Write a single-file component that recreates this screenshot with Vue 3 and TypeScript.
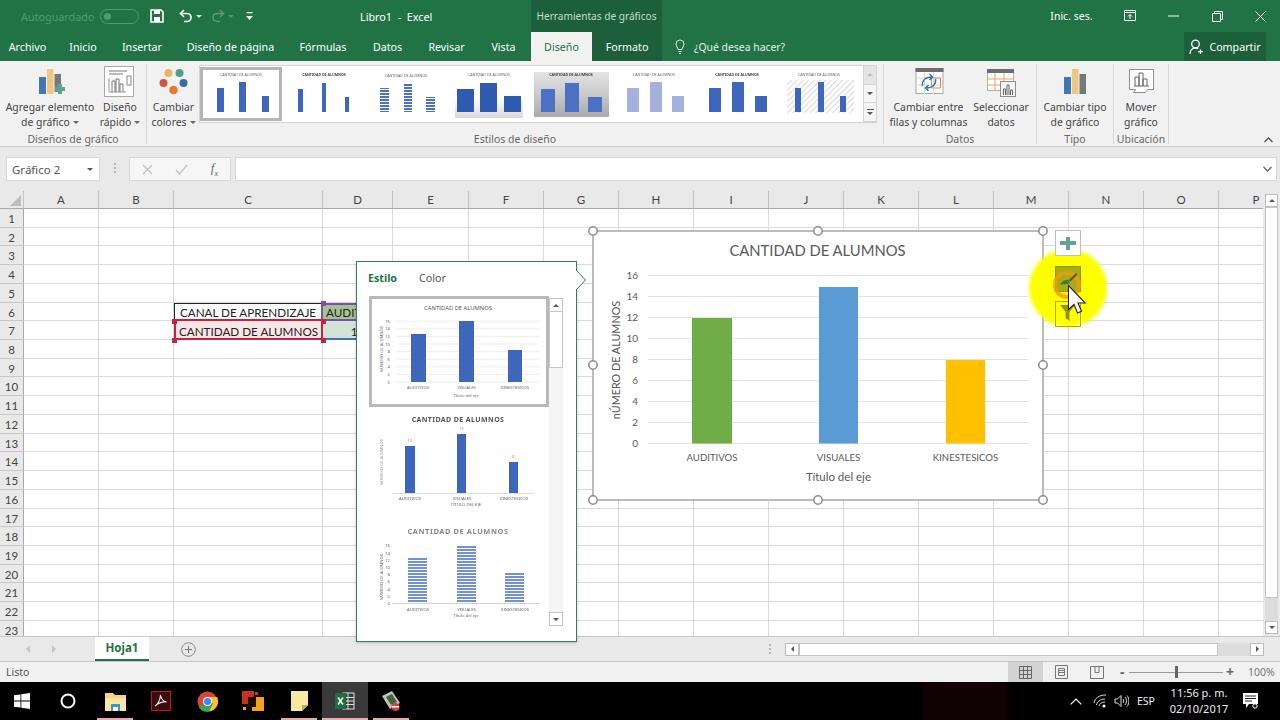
<script setup lang="ts">
const tabs = ['Archivo', 'Inicio', 'Insertar', 'Diseño de página', 'Fórmulas', 'Datos', 'Revisar', 'Vista', 'Diseño', 'Formato']

const columns = ['A', 'B', 'C', 'D', 'E', 'F', 'G', 'H', 'I', 'J', 'K', 'L', 'M', 'N', 'O', 'P']
const rows = Array.from({ length: 23 }, (_, i) => i + 1)

function cellClass(col: string, row: number) {
  const key = col + row
  if (key === 'C6') return 'c6'
  if (key === 'C7') return 'c7'
  if (key === 'D6') return 'd6'
  if (key === 'D7') return 'd7'
  return ''
}

function cellText(col: string, row: number) {
  const key = col + row
  if (key === 'C6') return 'CANAL DE APRENDIZAJE'
  if (key === 'C7') return 'CANTIDAD DE ALUMNOS'
  if (key === 'D6') return 'AUDITIVOS'
  if (key === 'D7') return '12'
  return ''
}

// bars of the big chart, screen coordinates
const ticks = [16, 14, 12, 10, 8, 6, 4, 2, 0]
const bars = [
  { x: 692, w: 40, top: 318, color: '#70ad47', label: 'AUDITIVOS', cx: 712 },
  { x: 819, w: 39, top: 287, color: '#5b9bd5', label: 'VISUALES', cx: 838.5 },
  { x: 946, w: 39, top: 360, color: '#ffc000', label: 'KINESTESICOS', cx: 965.5 },
]
const handles = [
  [593, 231], [818, 231], [1043, 231],
  [593, 365], [1043, 365],
  [593, 500], [818, 500], [1043, 500],
]

// ribbon gallery thumbs, screen coordinates as well
const gallery = [
  { title: 'CANTIDAD DE ALUMNOS', tx: 241, ty: 76, bold: false, fill: '#3f66bd', bars: [[217, 7, 88], [239, 7, 82], [262, 7, 96]] },
  { title: 'CANTIDAD DE ALUMNOS', tx: 324, ty: 76, bold: true, fill: '#3f66bd', bars: [[298, 5, 89], [322, 4, 83], [345, 4, 97]] },
  { title: 'CANTIDAD DE ALUMNOS', tx: 406, ty: 77, bold: false, fill: 'url(#stripeSmall)', bars: [[380, 9, 88], [404, 8, 83], [426, 9, 97]] },
  { title: 'CANTIDAD DE ALUMNOS', tx: 489, ty: 76, bold: false, fill: '#2f5cb0', bars: [[457, 17, 89], [480, 17, 83], [504, 17, 96]] },
  { title: 'CANTIDAD DE ALUMNOS', tx: 571, ty: 76, bold: true, fill: '#4a72c4', bars: [[541, 14, 89], [565, 14, 83], [588, 14, 97]] },
  { title: 'CANTIDAD DE ALUMNOS', tx: 654, ty: 76, bold: false, fill: '#a4b1de', bars: [[627, 12, 88], [650, 12, 82], [672, 12, 96]] },
  { title: 'CANTIDAD DE ALUMNOS', tx: 737, ty: 76, bold: true, fill: '#3f66bd', bars: [[709, 12, 88], [732, 12, 82], [755, 12, 96]] },
  { title: 'CANTIDAD DE ALUMNOS', tx: 819, ty: 76, bold: false, fill: '#3f66bd', bars: [[795, 6, 88], [818, 6, 82], [840, 6, 96]] },
]

// style pane thumbs
const paneTicks = [16, 14, 12, 10, 8, 6, 4, 2, 0]
const paneCats = ['AUDITIVOS', 'VISUALES', 'KINESTESICOS']
</script>

<template>
  <div class="app">
    <header class="titlebar">
      <div class="qat">
        <span class="autosave">Autoguardado</span>
        <span class="toggle"><i></i></span>
        <svg class="q-save" width="14" height="14" viewBox="0 0 14 14">
          <path d="M1 1h10l2 2v10H1z" fill="none" stroke="#fff" stroke-width="1.6" />
          <rect x="4" y="1" width="6" height="4" fill="#fff" />
          <rect x="4" y="8" width="6" height="5" fill="#fff" />
        </svg>
        <svg class="q-undo" width="14" height="14" viewBox="0 0 14 14">
          <path d="M5 1 1.500 4.500 5 8M2 4.500h6a4 4 0 0 1 0 8H5" fill="none" stroke="#fff" stroke-width="1.7" />
        </svg>
        <span class="caret white q-c1"></span>
        <svg class="q-redo" width="14" height="14" viewBox="0 0 14 14">
          <path d="M9 1l3.500 3.500L9 8M12 4.500H6a4 4 0 0 0 0 8h3" fill="none" stroke="#5c9c7a" stroke-width="1.5" />
        </svg>
        <span class="caret faint q-c2"></span>
        <svg class="q-more" width="7" height="9" viewBox="0 0 7 9">
          <rect x="0.500" y="0" width="6" height="1.300" fill="#fff" />
          <path d="M0 4h7L3.500 8z" fill="#fff" />
        </svg>
        <span class="doc-title">Libro1 &nbsp;-&nbsp; Excel</span>
      </div>
      <div class="tools-band">Herramientas de gráficos</div>
      <div class="win">
        <span class="signin">Inic. ses.</span>
        <span class="win-btn">
          <svg width="12" height="12" viewBox="0 0 12 12"><path d="M.5.5h11v10H.5zM.5 2.500h11M6 9V4.500M4 6.500l2-2 2 2" fill="none" stroke="#fff" /></svg>
        </span>
        <span class="win-btn"><svg width="11" height="2" viewBox="0 0 11 2"><path d="M0 1h11" stroke="#fff" /></svg></span>
        <span class="win-btn w3">
          <svg width="11" height="11" viewBox="0 0 11 11"><path d="M.5 2.500h8v8h-8zM2.500 2.500v-2h8v8h-2" fill="none" stroke="#fff" /></svg>
        </span>
        <span class="win-btn w4">
          <svg width="11" height="11" viewBox="0 0 11 11"><path d="M.5.500l10 10M10.500.500l-10 10" stroke="#fff" /></svg>
        </span>
      </div>
    </header>

    <nav class="tabbar">
      <span v-for="(t, i) in tabs" :key="i" class="tab" :class="{ active: i === 8, dark: i === 9 }">{{ t }}</span>
      <svg class="bulb" width="10" height="15" viewBox="0 0 10 15">
        <path d="M3 10.500C3 8.500 1 7.500 1 5a4 4 0 0 1 8 0c0 2.500-2 3.500-2 5.500zM3.500 12.500h3M4 14.500h2" fill="none" stroke="#e6f0ea" />
      </svg>
      <span class="tell">¿Qué desea hacer?</span>
      <span class="share">
        <svg width="15" height="16" viewBox="0 0 15 16">
          <circle cx="6.500" cy="5" r="3.800" fill="none" stroke="#fff" stroke-width="1.300" />
          <path d="M1 15c0-3.500 2.200-6 5.500-6 1 0 2 .2 2.700.7M11.500 10.500v4.500M9.200 12.700h4.600" fill="none" stroke="#fff" stroke-width="1.300" />
        </svg>
        Compartir
      </span>
    </nav>

    <section class="ribbon">
      <div class="group g1">
        <div class="group-body">
          <div class="rb w-add">
            <svg class="rb-icon" width="40" height="35" viewBox="30 64 40 35">
              <rect x="39" y="77" width="7" height="17" fill="#3f78b5" />
              <rect x="47" y="69" width="6.500" height="25" fill="#efc77c" />
              <rect x="54.500" y="74" width="6.500" height="18" fill="#77787b" />
              <path d="M58 87h-3v4h3v3h4v-3h3v-4h-3v-3h-4z" fill="#5fa394" />
            </svg>
            <span class="rb-text">Agregar elemento<br />de gráfico<span class="caret"></span></span>
          </div>
          <div class="rb w-quick">
            <svg class="rb-icon" width="40" height="35" viewBox="100 64 40 35">
              <rect x="104.500" y="66.500" width="29" height="30" fill="#fff" stroke="#a8a8a8" />
              <path d="M109 71h18M109 74h14" stroke="#777" stroke-width="1" />
              <path d="M109 78v14h17" fill="none" stroke="#999" />
              <path d="M112 92V81h3v11M116 92V79h3v13M120 92v-8h3v8" fill="none" stroke="#777" />
              <rect x="127" y="76" width="4" height="9" fill="none" stroke="#888" />
            </svg>
            <span class="rb-text">Diseño<br />rápido<span class="caret"></span></span>
          </div>
        </div>
        <div class="group-label">Diseños de gráfico</div>
      </div>

      <div class="group g2">
        <div class="group-body">
          <div class="rb w-colors">
            <svg class="rb-icon" width="40" height="35" viewBox="153.500 64 40 35">
              <circle cx="168" cy="73" r="4" fill="#e8b56b" />
              <circle cx="179" cy="73" r="4" fill="#4f9e8d" />
              <circle cx="163" cy="83" r="4" fill="#d9503f" />
              <circle cx="183" cy="83" r="4" fill="#3d66ad" />
              <circle cx="173" cy="90" r="4.300" fill="#e87a2e" />
            </svg>
            <span class="rb-text">Cambiar<br />colores<span class="caret"></span></span>
          </div>
          <div class="gallery">
            <svg class="gallery-svg" width="663" height="56" viewBox="200 66 663 56">
              <defs>
                <pattern id="stripeSmall" width="3" height="3" patternUnits="userSpaceOnUse">
                  <rect width="3" height="3" fill="#fff" />
                  <rect width="3" height="2" fill="#4a72c4" />
                </pattern>
                <pattern id="hatch" width="4" height="4" patternUnits="userSpaceOnUse" patternTransform="rotate(45)">
                  <rect width="4" height="4" fill="#fff" />
                  <rect width="1" height="4" fill="#d8d8d8" />
                </pattern>
                <linearGradient id="greyBg" x1="0" y1="0" x2="0" y2="1">
                  <stop offset="0" stop-color="#e4e4e4" />
                  <stop offset=".5" stop-color="#c9c9c9" />
                  <stop offset="1" stop-color="#a9a9a9" />
                </linearGradient>
                <linearGradient id="softBg" x1="0" y1="0" x2="0" y2="1">
                  <stop offset=".4" stop-color="#fff" />
                  <stop offset="1" stop-color="#d9d9d9" />
                </linearGradient>
              </defs>
              <rect x="200" y="66" width="663" height="56" fill="#fff" />
              <rect x="201.500" y="68.500" width="79" height="51" fill="#fff" stroke="#b5b5b5" stroke-width="3" />
              <rect x="455" y="84" width="68" height="34" fill="url(#softBg)" />
              <rect x="534" y="72" width="75" height="45" fill="url(#greyBg)" />
              <rect x="787" y="80" width="67" height="33" fill="url(#hatch)" />
              <g v-for="(g, i) in gallery" :key="i">
                <text :x="g.tx" :y="g.ty" class="g-title" :class="{ bold: g.bold }" text-anchor="middle">{{ g.title }}</text>
                <rect v-for="(b, j) in g.bars" :key="j" :x="b[0]" :y="b[2]" :width="b[1]" :height="112 - b[2]" :fill="g.fill" />
              </g>
            </svg>
            <div class="gallery-scroll">
              <span class="gs-btn disabled"><i class="tri up"></i></span>
              <span class="gs-btn"><i class="tri down"></i></span>
              <span class="gs-btn"><i class="more"></i><i class="tri down"></i></span>
            </div>
          </div>
        </div>
        <div class="group-label">Estilos de diseño</div>
      </div>

      <div class="group g3">
        <div class="group-body">
          <div class="rb w-switch">
            <svg class="rb-icon" width="40" height="35" viewBox="908.500 64 40 35">
              <rect x="915.500" y="68.500" width="27" height="25" fill="#fff" stroke="#a6a6a6" />
              <rect x="915" y="68" width="28" height="4" fill="#6d6d6d" />
              <path d="M915 78h28M915 85h28M924 72v22M933 72v22" stroke="#d8d8d8" />
              <path d="M931 78h9v10h-9z" fill="none" stroke="#ed8b4a" />
              <path d="M922 86c-1-5 3-9 9-9M929 74l3 3-3 3M935 79c1 5-3 9-9 9M928 85l-3 3 3 3" fill="none" stroke="#2f6fb1" stroke-width="1.400" />
            </svg>
            <span class="rb-text">Cambiar entre<br />filas y columnas</span>
          </div>
          <div class="rb w-select">
            <svg class="rb-icon" width="40" height="35" viewBox="981 64 40 35">
              <rect x="987.500" y="69.500" width="26" height="21" fill="#fff" stroke="#b0b0b0" />
              <rect x="987" y="69" width="27" height="4" fill="#6d6d6d" />
              <path d="M987 79h26M987 85h13M995 73v18M1004 73v8" stroke="#eda16b" />
              <rect x="1000.500" y="81.500" width="15" height="15" fill="#f4f4f4" stroke="#8c8c8c" />
              <path d="M1003.500 95v-6h2v6M1007 95v-10h2v10M1010.500 95v-5h2v5" fill="none" stroke="#666" />
            </svg>
            <span class="rb-text">Seleccionar<br />datos</span>
          </div>
        </div>
        <div class="group-label">Datos</div>
      </div>

      <div class="group g4">
        <div class="group-body">
          <div class="rb w-type">
            <svg class="rb-icon" width="40" height="35" viewBox="1055 64 40 35">
              <rect x="1064" y="77" width="7" height="17" fill="#3f78b5" />
              <rect x="1072" y="69" width="6.500" height="25" fill="#efc77c" />
              <rect x="1079.500" y="74" width="6.500" height="20" fill="#77787b" />
            </svg>
            <span class="rb-text">Cambiar tipo<br />de gráfico</span>
          </div>
        </div>
        <div class="group-label">Tipo</div>
      </div>

      <div class="group g5">
        <div class="group-body">
          <div class="rb w-move">
            <svg class="rb-icon" width="40" height="35" viewBox="1121 64 40 35">
              <path d="M1129.500 69.500h24v20h-6l-2 3h-12l2-3h-6z" fill="#fff" stroke="#8f8f8f" />
              <path d="M1135 86V77h4v9M1139 86V73h4v13M1143 86v-7h4v7M1134 86h15" fill="none" stroke="#666" />
            </svg>
            <span class="rb-text">Mover<br />gráfico</span>
          </div>
        </div>
        <div class="group-label">Ubicación</div>
      </div>

      <svg class="collapse" width="9" height="6" viewBox="0 0 9 6"><path d="M.5 5l4-4 4 4" fill="none" stroke="#555" stroke-width="1.300" /></svg>
    </section>

    <section class="formula">
      <div class="namebox">Gráfico 2<i class="tri down dark"></i></div>
      <span class="grip"></span>
      <div class="fx-group">
        <svg width="11" height="11" viewBox="0 0 11 11"><path d="M1 1l9 9M10 1l-9 9" stroke="#c4c4c4" stroke-width="1.300" /></svg>
        <svg width="13" height="11" viewBox="0 0 13 11"><path d="M1 6l3.500 4L12 1" fill="none" stroke="#c4c4c4" stroke-width="1.500" /></svg>
        <span class="fx">f<sub>x</sub></span>
      </div>
      <div class="formula-input">
        <svg width="9" height="6" viewBox="0 0 9 6"><path d="M.5 1l4 4 4-4" fill="none" stroke="#666" stroke-width="1.300" /></svg>
      </div>
    </section>

    <section class="workspace">
      <div class="sheet">
        <div class="grid">
          <div class="corner"><i></i></div>
          <div v-for="c in columns" :key="c" class="col-head">{{ c }}</div>
          <template v-for="r in rows" :key="r">
            <div class="row-head">{{ r }}</div>
            <div v-for="c in columns" :key="c + r" class="cell" :class="cellClass(c, r)">{{ cellText(c, r) }}</div>
          </template>
        </div>
      </div>
      <div class="vscroll">
        <span class="sb-btn"><i class="tri up dark"></i></span>
        <div class="vtrack"><div class="vthumb"></div></div>
        <span class="sb-btn"><i class="tri down dark"></i></span>
      </div>
    </section>

    <section class="sheetbar">
      <i class="tri left pale"></i>
      <i class="tri right pale"></i>
      <span class="sheet-tab">Hoja1</span>
      <svg class="add-sheet" width="15" height="15" viewBox="0 0 15 15">
        <circle cx="7.500" cy="7.500" r="6.800" fill="none" stroke="#8a8a8a" />
        <path d="M7.500 4v7M4 7.500h7" stroke="#777" />
      </svg>
      <span class="grip sb-grip"></span>
      <div class="hscroll">
        <span class="sb-btn h"><i class="tri left dark"></i></span>
        <div class="hthumb"></div>
        <div class="htrack"></div>
        <span class="sb-btn h"><i class="tri right dark"></i></span>
      </div>
    </section>

    <footer class="status">
      <span class="ready">Listo</span>
      <div class="views">
        <span class="view on">
          <svg width="13" height="13" viewBox="0 0 13 13"><path d="M.5.500h12v12H.5zM.5 4.500h12M.5 8.500h12M4.500.500v12M8.500.500v12" fill="none" stroke="#666" /></svg>
        </span>
        <span class="view">
          <svg width="13" height="14" viewBox="0 0 13 14"><path d="M.5.500h12v13H.5zM3.500 3.500h6v7h-6zM3.500 5.500h6M3.500 7.500h6" fill="none" stroke="#777" /></svg>
        </span>
        <span class="view">
          <svg width="14" height="13" viewBox="0 0 14 13"><path d="M.5.500h13v12H.5zM5 .500v6h4v-6" fill="none" stroke="#777" /></svg>
        </span>
      </div>
      <span class="zoom-sign">-</span>
      <div class="slider"><i></i></div>
      <span class="zoom-sign plus">+</span>
      <span class="zoom-val">100%</span>
    </footer>

    <footer class="taskbar">
      <span class="task first">
        <svg width="16" height="16" viewBox="0 0 16 16" fill="#fff"><path d="M0 2.300l6.500-.9v6.200H0zM7.300 1.300 16 0v7.600H7.300zM0 8.400h6.500v6.200L0 13.700zM7.300 8.400H16V16l-8.700-1.200z" /></svg>
      </span>
      <span class="task second">
        <svg width="16" height="16" viewBox="0 0 16 16"><circle cx="8" cy="8" r="6.500" fill="none" stroke="#fff" stroke-width="2" /></svg>
      </span>
      <span class="task open">
        <svg width="21" height="20" viewBox="0 0 21 20">
          <path d="M0 2h8l2 2h11v16H0z" fill="#f6d77e" />
          <path d="M0 7h21v13H0z" fill="#fbe7a3" />
          <rect x="6" y="13" width="9" height="7" fill="#2f9bd6" />
          <rect x="8" y="16" width="5" height="4" fill="#fff" />
        </svg>
      </span>
      <span class="task">
        <svg width="20" height="20" viewBox="0 0 20 20">
          <rect x="0.500" y="0.500" width="19" height="19" fill="#3d0b0b" stroke="#b91c1c" />
          <path d="M4 15c3-2 5-6 5.500-11 .5 4 2 6 6 7-4-.5-7 0-11.500 4z" fill="none" stroke="#ececec" stroke-width="1.100" />
        </svg>
      </span>
      <span class="task">
        <svg width="21" height="21" viewBox="0 0 21 21">
          <circle cx="10.500" cy="10.500" r="10" fill="#db4437" />
          <path d="M1.500 15.500A10 10 0 0 0 12 20.500l4.500-8h-6z" fill="#34a853" />
          <path d="M10.500 6H20a10 10 0 0 1-8 14.500l4-8z" fill="#fbc02d" />
          <circle cx="10.500" cy="10.500" r="4.600" fill="#fff" />
          <circle cx="10.500" cy="10.500" r="3.600" fill="#4285f4" />
        </svg>
      </span>
      <span class="task">
        <svg width="22" height="20" viewBox="0 0 22 20">
          <rect x="0" y="0" width="12" height="13" fill="#c9301f" />
          <rect x="10" y="6" width="12" height="14" fill="#f5a31a" />
          <rect x="6" y="6" width="8" height="10" fill="#1d0d05" />
          <rect x="13" y="1" width="3" height="3" fill="#c9301f" />
          <rect x="1" y="16" width="3" height="3" fill="#f5a31a" />
        </svg>
      </span>
      <span class="task open">
        <svg width="17" height="20" viewBox="0 0 17 20">
          <path d="M0 0h17v14l-6 6H0z" fill="#f5eba0" />
          <path d="M11 20v-6h6z" fill="#b8ac5c" />
        </svg>
      </span>
      <span class="task open active">
        <svg width="20" height="20" viewBox="0 0 20 20">
          <rect x="8" y="2" width="11" height="16" fill="none" stroke="#d7e6dd" />
          <path d="M8 6.500h11M8 10h11M8 13.500h11M13 2v16" stroke="#d7e6dd" />
          <rect x="0" y="2" width="11" height="16" fill="#1d6f42" />
          <path d="M3 6.500l5 7M8 6.500l-5 7" stroke="#fff" stroke-width="1.500" />
        </svg>
      </span>
      <span class="task open">
        <svg width="20" height="22" viewBox="0 0 20 22">
          <path d="M1 6l10-5 8 12-10 6z" fill="#bfc3c4" />
          <path d="M5 7l6-3 5 8-6 3z" fill="#46633a" />
          <circle cx="14.500" cy="17" r="4" fill="#e33b3b" />
          <rect x="11" y="16" width="7" height="1.500" fill="#fff" />
        </svg>
      </span>
      <div class="tray">
        <svg width="12" height="7" viewBox="0 0 12 7"><path d="M.7 6.300 6 1l5.300 5.300" fill="none" stroke="#fff" stroke-width="1.200" /></svg>
        <svg class="wifi" width="14" height="14" viewBox="0 0 14 14"><path d="M1 9c1-5 5-8 12-8M3.500 11c.5-3 3.500-6 8.500-6M6 12c.3-2 2.500-4 6-4" fill="none" stroke="#ddd" /><circle cx="11" cy="12" r="1.500" fill="#fff" /></svg>
        <svg class="sound" width="15" height="14" viewBox="0 0 15 14"><path d="M1 5h2.500L7 1.500v11L3.500 9H1zM9 5c1 1 1 3 0 4M11 3c2 2 2 6 0 8M13 1.500c2.500 3 2.500 8 0 11" fill="none" stroke="#ddd" /></svg>
        <span class="lang">ESP</span>
        <span class="clock">11:56 p. m.<br />02/10/2017</span>
        <svg class="notif" width="15" height="16" viewBox="0 0 15 16">
          <path d="M0 0h15v11H6l-3 4v-4H0z" fill="#fff" />
          <path d="M2 3h11M2 5.500h11M2 8h7" stroke="#222" />
          <circle cx="12" cy="13" r="2.200" fill="#111" stroke="#fff" />
        </svg>
      </div>
    </footer>

    <!-- floating chart -->
    <svg class="chart" width="462" height="281" viewBox="587 225 462 281">
      <rect x="593" y="231" width="450" height="269" fill="#fff" stroke="#bcbcbc" stroke-width="2" />
      <text x="817.500" y="255.500" class="c-title" text-anchor="middle">CANTIDAD DE ALUMNOS</text>
      <g v-for="t in ticks" :key="t">
        <line x1="648" x2="1028" :y1="443.500 - t * 10.500" :y2="443.500 - t * 10.500" stroke="#e4e4e4" stroke-width="1" />
        <text x="638" :y="447 - t * 10.500" class="c-tick" text-anchor="end">{{ t }}</text>
      </g>
      <text class="c-rot" text-anchor="middle" transform="translate(620 360) rotate(-90)">nÚMERO DE ALUMNOS</text>
      <g v-for="b in bars" :key="b.label">
        <rect :x="b.x" :y="b.top" :width="b.w" :height="443.500 - b.top" :fill="b.color" />
        <text :x="b.cx" y="461" class="c-axis" text-anchor="middle">{{ b.label }}</text>
      </g>
      <text x="838.500" y="481" class="c-label" text-anchor="middle">Título del eje</text>
      <circle v-for="(h, i) in handles" :key="i" :cx="h[0]" :cy="h[1]" r="4.200" fill="#fff" stroke="#8c8c8c" stroke-width="1.500" />
    </svg>

    <!-- chart style pane -->
    <aside class="pane">
      <div class="pane-tabs">
        <span class="pane-tab on">Estilo</span>
        <span class="pane-tab">Color</span>
      </div>
      <div class="pane-body">
        <div class="pane-list">
          <svg width="180" height="111" viewBox="369 296 180 111">
            <rect x="370.500" y="297.500" width="177" height="108" fill="#fff" stroke="#b9b9b9" stroke-width="3" />
            <text x="458" y="310" class="p-t1" text-anchor="middle">CANTIDAD DE ALUMNOS</text>
            <line v-for="t in paneTicks" :key="t" x1="396" x2="540" :y1="382 - t * 3.800" :y2="382 - t * 3.800" stroke="#efefef" />
            <text v-for="t in paneTicks" :key="'l' + t" x="390" :y="383.500 - t * 3.800" class="p-xs" text-anchor="end">{{ t }}</text>
            <text class="p-xs" text-anchor="middle" transform="translate(383 349) rotate(-90)">NÚMERO DE ALUMNOS</text>
            <rect x="411" y="334" width="15" height="48" fill="#3f66bd" />
            <rect x="459" y="321" width="15" height="61" fill="#3f66bd" />
            <rect x="508" y="350" width="14" height="32" fill="#3f66bd" />
            <text v-for="(c, i) in paneCats" :key="c" :x="418 + i * 48.500" y="389" class="p-xs" text-anchor="middle">{{ c }}</text>
            <text x="466" y="396.500" class="p-xs" text-anchor="middle">Título del eje</text>
          </svg>
          <svg width="180" height="111" viewBox="369 407 180 111">
            <text x="458" y="422" class="p-t2" text-anchor="middle">CANTIDAD DE ALUMNOS</text>
            <text class="p-xs pale" text-anchor="middle" transform="translate(383 462) rotate(-90)">NÚMERO DE ALUMNOS</text>
            <rect x="405" y="446" width="10" height="47" fill="#3f66bd" />
            <rect x="457" y="434" width="9" height="59" fill="#3f66bd" />
            <rect x="509" y="462" width="9" height="31" fill="#3f66bd" />
            <line x1="392" x2="534" y1="493.500" y2="493.500" stroke="#dcdcdc" />
            <text x="410" y="442" class="p-xs pale" text-anchor="middle">12</text>
            <text x="461.500" y="430" class="p-xs pale" text-anchor="middle">15</text>
            <text x="513.500" y="458" class="p-xs pale" text-anchor="middle">8</text>
            <text v-for="(c, i) in paneCats" :key="c" :x="410 + i * 52" y="500" class="p-xs" text-anchor="middle">{{ c }}</text>
            <text x="466" y="506" class="p-xs" text-anchor="middle">TÍTULO DEL EJE</text>
          </svg>
          <svg width="180" height="111" viewBox="369 518 180 111">
            <defs>
              <pattern id="stripePane" width="3" height="3" patternUnits="userSpaceOnUse">
                <rect width="3" height="3" fill="#fff" />
                <rect width="3" height="2" fill="#7391d2" />
              </pattern>
            </defs>
            <text x="458" y="533.500" class="p-t3" text-anchor="middle">CANTIDAD DE ALUMNOS</text>
            <text v-for="t in paneTicks" :key="t" x="390" :y="605 - t * 3.600" class="p-xs" text-anchor="end">{{ t }}</text>
            <text class="p-xs" text-anchor="middle" transform="translate(383 577) rotate(-90)">NÚMERO DE ALUMNOS</text>
            <rect x="408" y="557" width="19" height="46" fill="url(#stripePane)" />
            <rect x="457" y="545" width="19" height="58" fill="url(#stripePane)" />
            <rect x="505" y="572" width="19" height="31" fill="url(#stripePane)" />
            <line x1="392" x2="540" y1="603.500" y2="603.500" stroke="#c9d2e8" />
            <text v-for="(c, i) in paneCats" :key="c" :x="418 + i * 48.500" y="610.500" class="p-xs" text-anchor="middle">{{ c }}</text>
            <text x="466" y="617" class="p-xs" text-anchor="middle">Título del eje</text>
          </svg>
        </div>
        <div class="pane-scroll">
          <span class="ps-btn"><i class="tri up dark"></i></span>
          <div class="ps-thumb"></div>
          <div class="ps-track"></div>
          <span class="ps-btn"><i class="tri down dark"></i></span>
        </div>
      </div>
      <svg class="pane-arrow" width="11" height="20" viewBox="0 0 11 20"><path d="M0 0l9.500 10L0 20" fill="#fff" stroke="#3b7a60" /></svg>
    </aside>

    <!-- chart side buttons with the recording highlight and the pointer -->
    <svg class="pointer" width="96" height="120" viewBox="1020 225 96 120">
      <defs>
        <radialGradient id="glow">
          <stop offset=".88" stop-color="#ffff00" />
          <stop offset="1" stop-color="#ffff00" stop-opacity=".15" />
        </radialGradient>
      </defs>
      <circle cx="1068" cy="288" r="41" fill="url(#glow)" />
      <rect x="1055.500" y="230.500" width="25" height="25" fill="#fff" stroke="#bdbdbd" />
      <path d="M1066 237h4v4h6v4h-6v5h-4v-5h-6v-4h6z" fill="#5fa394" />
      <rect x="1055.500" y="301.500" width="25" height="25" fill="none" stroke="#a9a90c" />
      <rect x="1055.500" y="266.500" width="25" height="25" fill="#a8ad12" stroke="#8f9410" />
      <circle cx="1067" cy="285" r="12" fill="none" stroke="#f39a12" stroke-width="4" opacity=".8" />
      <path d="M1060 284c3-4 7-5 9-4l1 3c-3 1-7 2-10 1z" fill="#3f7d3b" />
      <path d="M1069 280l7-7 1.500 1.500-7 7z" fill="#7a4a24" />
      <path d="M1060 305h15l-5.500 7v9l-4-3v-6z" fill="#8f9a12" />
      <path d="M1068.500 285.500v24l5.500-5 3.500 8.500 4-1.800-3.500-8.200h7.200z" fill="#fff" stroke="#222" stroke-width="1.100" />
    </svg>

    <!-- reference range handles on the cells -->
    <i class="rh red" style="left: 172px; top: 319px"></i>
    <i class="rh red" style="left: 321px; top: 319px"></i>
    <i class="rh red" style="left: 172px; top: 338px"></i>
    <i class="rh red" style="left: 321px; top: 338px"></i>
    <i class="rh purple" style="left: 321px; top: 301px"></i>
  </div>
</template>

<style>
html,
body {
  margin: 0;
  background: #fff;
  overflow: hidden;
}
</style>

<style scoped>
.app {
  position: relative;
  width: 1280px;
  height: 720px;
  overflow: hidden;
  display: flex;
  flex-direction: column;
  font-family: 'Noto Sans', 'Open Sans', sans-serif;
  font-size: 11.5px;
  color: #444;
}

/* title row */
.titlebar {
  height: 32px;
  flex: none;
  background: #217346;
  display: grid;
  grid-template-columns: 531px 131px 1fr;
  color: #fff;
}
.qat {
  display: flex;
  align-items: center;
  padding-left: 21px;
}
.autosave {
  width: 79px;
  color: #4f9a70;
  font-size: 10.800px;
  white-space: nowrap;
}
.toggle {
  width: 34px;
  height: 13px;
  border: 1px solid #4f9a70;
  border-radius: 8px;
  display: flex;
  align-items: center;
  padding-left: 3px;
  box-sizing: content-box;
  margin-right: -3px;
}
.toggle i {
  width: 7px;
  height: 7px;
  border-radius: 50%;
  background: #4f9a70;
}
.q-save { margin-left: 14px; }
.q-undo { margin-left: 15px; }
.q-c1 { margin-left: 4px; }
.q-redo { margin-left: 9px; }
.q-c2 { margin-left: 5px; }
.q-more { margin-left: 12px; }
.doc-title {
  margin-left: 107px;
  font-size: 10.800px;
  white-space: nowrap;
}
.tools-band {
  background: #1c5f3b;
  color: #c8dcd0;
  font-size: 10.100px;
  display: flex;
  align-items: center;
  justify-content: center;
  white-space: nowrap;
}
.win {
  display: flex;
  align-items: center;
  justify-content: flex-end;
}
.signin {
  margin-right: 15px;
  font-size: 10.500px;
}
.win-btn {
  width: 44px;
  display: flex;
  justify-content: center;
}
.win-btn.w3 { width: 44.5px; }
.win-btn.w4 { width: 40px; }

/* tabs */
.tabbar {
  height: 29px;
  flex: none;
  background: #217346;
  color: #fff;
  display: grid;
  grid-template-columns: 55px 56px 62px 115px 70px 59px 59px 55px 61px 70px 13px 11px 8px 100px 1fr auto;
  align-items: stretch;
}
.tab {
  display: flex;
  align-items: center;
  justify-content: center;
  white-space: nowrap;
  font-size: 10.700px;
}
.tab.active {
  background: #f1f1f1;
  color: #217346;
}
.tab.dark {
  background: #1c5f3b;
}
.bulb {
  grid-column: 12;
  align-self: center;
}
.tell {
  grid-column: 14;
  align-self: center;
  color: #e6f0ea;
  font-size: 10.400px;
  white-space: nowrap;
}
.share {
  grid-column: 16;
  width: 82px;
  margin-right: 14px;
  background: #1c5f3b;
  display: flex;
  align-items: center;
  justify-content: center;
  gap: 5px;
  white-space: nowrap;
  font-size: 10.700px;
}

/* ribbon */
.ribbon {
  position: relative;
  height: 86px;
  flex: none;
  box-sizing: border-box;
  background: #f1f1f1;
  border-bottom: 1px solid #d2d2d2;
  padding-top: 3px;
  display: flex;
  color: #444;
}
.group {
  height: 80px;
  display: flex;
  flex-direction: column;
  border-right: 1px solid #d6d6d6;
  box-sizing: border-box;
}
.g1 { width: 147px; }
.g2 { width: 737px; }
.g3 { width: 153px; }
.g4 { width: 77px; }
.g5 { width: 55px; }
.group-body {
  flex: 1;
  display: flex;
  min-height: 0;
}
.group-label {
  height: 14px;
  text-align: center;
  font-size: 10.500px;
  line-height: 14px;
  color: #666;
  white-space: nowrap;
  margin-bottom: -2px;
}
.rb {
  display: flex;
  flex-direction: column;
  align-items: center;
  flex: none;
}
.rb-icon {
  flex: none;
  margin-bottom: 1px;
}
.rb-text {
  text-align: center;
  line-height: 15px;
  font-size: 10.400px;
  white-space: nowrap;
}
.w-add { width: 100px; }
.w-quick { width: 40px; }
.w-colors { width: 53px; }
.gallery {
  width: 676px;
  height: 56px;
  margin-top: 2px;
  flex: none;
  display: flex;
  box-sizing: border-box;
  box-shadow: 0 0 0 1px #d4d4d4;
}
.gallery-svg {
  flex: none;
  filter: blur(0.4px);
}
.g-title {
  font-size: 3.600px;
  fill: #666;
}
.g-title.bold {
  font-weight: 700;
  fill: #444;
}
.gallery-scroll {
  width: 13px;
  display: flex;
  flex-direction: column;
  background: #f6f6f6;
  border-left: 1px solid #d4d4d4;
}
.gs-btn {
  flex: 1;
  display: flex;
  flex-direction: column;
  gap: 2px;
  align-items: center;
  justify-content: center;
  border-bottom: 1px solid #d4d4d4;
}
.gs-btn.disabled {
  background: #e4e4e4;
}
.gs-btn .tri {
  border-width: 3px;
}
.gs-btn .tri.up { border-top: 0; }
.gs-btn .tri.down { border-bottom: 0; }
.gs-btn.disabled .tri {
  border-bottom-color: #bbb;
}
.gs-btn .more {
  width: 7px;
  height: 1px;
  background: #555;
}
.w-switch { width: 89px; }
.w-select { width: 56px; }
.w-type { width: 76px; }
.w-move { width: 54px; }
.collapse {
  position: absolute;
  left: 1264px;
  top: 76px;
}
.caret {
  display: inline-block;
  width: 0;
  height: 0;
  margin-left: 3px;
  vertical-align: 2px;
  border: 3px solid transparent;
  border-top-color: #666;
  border-bottom: 0;
}
.caret.white { border-top-color: #cfe3d8; margin-top: 0; vertical-align: 0; }
.caret.faint { border-top-color: #4f9a70; vertical-align: 0; }

/* triangles shared by scroll buttons */
.tri {
  display: block;
  width: 0;
  height: 0;
  border: 4px solid transparent;
}
.tri.up {
  border-top: 0;
  border-bottom-color: #555;
}
.tri.down {
  border-bottom: 0;
  border-top-color: #555;
}
.tri.left {
  border-left: 0;
  border-right-color: #555;
}
.tri.right {
  border-right: 0;
  border-left-color: #555;
}
.tri.pale.left { border-right-color: #c4c4c4; }
.tri.pale.right { border-left-color: #c4c4c4; }

/* formula bar */
.formula {
  height: 44px;
  flex: none;
  box-sizing: border-box;
  background: #e9e9e9;
  display: flex;
  align-items: flex-start;
  padding: 10px 3px 0 6px;
}
.namebox {
  width: 94px;
  height: 24px;
  box-sizing: border-box;
  background: #fff;
  border: 1px solid #d8d8d8;
  display: flex;
  align-items: center;
  justify-content: space-between;
  padding: 0 6px 0 5px;
  font-size: 11.500px;
  color: #555;
}
.grip {
  width: 2px;
  height: 11px;
  margin: 6px 13px 0;
  background: repeating-linear-gradient(to bottom, #b5b5b5 0 2px, transparent 2px 4px);
}
.formula > .grip {
  margin-left: 14px;
}
.fx-group {
  width: 102px;
  height: 24px;
  box-sizing: border-box;
  background: #f6f6f6;
  border: 1px solid #d8d8d8;
  display: flex;
  align-items: center;
  justify-content: space-between;
  padding: 0 12px;
}
.fx {
  font-family: 'Liberation Serif', serif;
  font-style: italic;
  font-size: 13px;
  color: #666;
}
.fx sub {
  font-size: 8px;
}
.formula-input {
  margin-left: 4px;
  flex: 1;
  height: 24px;
  box-sizing: border-box;
  background: #fff;
  border: 1px solid #d8d8d8;
  display: flex;
  align-items: center;
  justify-content: flex-end;
  padding-right: 4px;
}

/* sheet */
.workspace {
  height: 445px;
  flex: none;
  display: flex;
  background: #e9e9e9;
}
.sheet {
  width: 1263px;
  overflow: hidden;
}
.grid {
  display: grid;
  grid-template-columns: 24px 75px 75px 149px 70px 76px repeat(10, 75px) 75px;
  grid-template-rows: 18px repeat(23, 18.720px);
  background: #fff;
  font-family: 'Lato', 'Noto Sans', sans-serif;
}
.corner {
  background: #e9e9e9;
  border-right: 1px solid #c2c2c2;
  border-bottom: 1px solid #a8a8a8;
  box-sizing: border-box;
  display: flex;
  justify-content: flex-end;
  align-items: flex-end;
  padding: 0 2px 2px 0;
}
.corner i {
  width: 0;
  height: 0;
  border-left: 11px solid transparent;
  border-bottom: 11px solid #bdbdbd;
}
.col-head {
  background: #e9e9e9;
  border-right: 1px solid #c2c2c2;
  border-bottom: 1px solid #a8a8a8;
  box-sizing: border-box;
  text-align: center;
  line-height: 17px;
  font-size: 11.500px;
  color: #444;
}
.row-head {
  background: #e9e9e9;
  border-right: 1px solid #a8a8a8;
  border-bottom: 1px solid #c8c8c8;
  box-sizing: border-box;
  text-align: center;
  line-height: 20px;
  font-size: 11.500px;
  color: #444;
}
.cell {
  border-right: 1px solid #dadada;
  border-bottom: 1px solid #dadada;
  box-sizing: border-box;
  font-size: 11.700px;
  color: #222;
  display: flex;
  align-items: center;
  justify-content: center;
  white-space: nowrap;
  overflow: hidden;
}
.cell.c6 {
  border-top: 1px solid #222;
  border-left: 1px solid #222;
  border-bottom: 2px solid #c8223f;
  border-right: 2px solid #7a4fb5;
  padding-top: 2px;
}
.cell.c7 {
  background: #fbe6e6;
  border: 2px solid #c8223f;
  border-top-width: 0;
  padding-top: 2px;
}
.cell.d6 {
  background: #a9c291;
  border-top: 2px solid #7a4fb5;
  border-bottom: 2px solid #7a4fb5;
  justify-content: flex-start;
  padding-left: 3px;
  padding-top: 1px;
}
.cell.d7 {
  background: #d3e3d8;
  border-bottom: 2px solid #3f6fc4;
  padding-top: 2px;
}
.rh {
  position: absolute;
  width: 5px;
  height: 5px;
}
.rh.red { background: #c8223f; }
.rh.purple { background: #7a4fb5; }

.vscroll {
  width: 17px;
  display: flex;
  flex-direction: column;
  align-items: center;
  padding-top: 3px;
  padding-bottom: 2px;
  box-sizing: border-box;
}
.sb-btn {
  width: 13px;
  height: 13px;
  flex: none;
  background: #fff;
  border: 1px solid #bdbdbd;
  display: flex;
  align-items: center;
  justify-content: center;
  box-sizing: border-box;
}
.vtrack {
  flex: 1;
  width: 13px;
  background: #dcdcdc;
}
.vthumb {
  height: 391px;
  background: #fff;
  border: 1px solid #c4c4c4;
  box-sizing: border-box;
}
.tri.dark.up,
.tri.dark.down {
  border-width: 3px;
}
.tri.dark.up { border-top: 0; }
.tri.dark.down { border-bottom: 0; }
.tri.dark.left,
.tri.dark.right {
  border-width: 3.500px;
}
.tri.dark.left { border-left: 0; }
.tri.dark.right { border-right: 0; }

/* sheet tabs */
.sheetbar {
  height: 26px;
  flex: none;
  box-sizing: border-box;
  background: #e9e9e9;
  border-top: 1px solid #c6c6c6;
  border-bottom: 1px solid #c6c6c6;
  display: flex;
  align-items: center;
  padding-left: 26px;
}
.sheetbar > .tri.right { margin-left: 22px; }
.sheet-tab {
  width: 54px;
  height: 24px;
  margin-left: 39px;
  align-self: flex-start;
  box-sizing: border-box;
  background: #fff;
  border-bottom: 2px solid #217346;
  color: #217346;
  font-weight: 700;
  font-size: 11.500px;
  line-height: 22px;
  text-align: center;
}
.add-sheet {
  margin-left: 31.500px;
}
.sb-grip {
  margin: 0 0 0 573.500px;
}
.hscroll {
  margin-left: 14px;
  width: 479px;
  height: 13px;
  display: flex;
}
.hthumb {
  width: 419px;
  background: #fff;
  border: 1px solid #c4c4c4;
  box-sizing: border-box;
}
.htrack {
  flex: 1;
  background: #dcdcdc;
}
.sb-btn.h {
  width: 14px;
}

/* status */
.status {
  height: 20px;
  flex: none;
  background: #f1f1f1;
  display: flex;
  align-items: center;
  padding-left: 6px;
  font-size: 10.500px;
  color: #555;
}
.ready { width: 1002px; }
.views {
  display: flex;
  height: 20px;
}
.view {
  width: 36px;
  display: flex;
  align-items: center;
  justify-content: center;
}
.view.on {
  background: #d3d3d3;
  width: 35px;
}
.zoom-sign {
  margin-left: 5px;
  width: 8px;
  font-size: 14px;
  font-weight: 700;
  line-height: 20px;
  color: #666;
}
.slider {
  margin-left: 1px;
  width: 94px;
  height: 1px;
  background: #999;
  display: flex;
  justify-content: center;
}
.slider i {
  margin-top: -6px;
  width: 3px;
  height: 12px;
  background: #666;
  flex: none;
}
.zoom-sign.plus {
  margin-left: 3px;
}
.zoom-val {
  margin-left: 14px;
  color: #777;
  white-space: nowrap;
}

/* taskbar */
.taskbar {
  flex: 1;
  background: linear-gradient(90deg, #000 0 920px, #100104 925px 1005px, #000 1012px);
  display: flex;
  align-items: stretch;
  color: #eee;
}
.task {
  position: relative;
  width: 46px;
  display: flex;
  align-items: center;
  justify-content: center;
  flex: none;
}
.task.first { width: 44px; }
.task.second { width: 48px; }
.task.active {
  background: #3a3a3a;
}
.task.open::after {
  content: '';
  position: absolute;
  left: 5px;
  right: 5px;
  bottom: 0;
  height: 2px;
  background: #e9a9aa;
}
.task.active::after {
  left: 0;
  right: 0;
}
.tray {
  margin-left: auto;
  display: flex;
  align-items: center;
  padding-right: 22px;
  font-size: 10.500px;
}
.wifi { margin-left: 11px; }
.sound { margin-left: 6.500px; }
.lang {
  margin-left: 8.500px;
  width: 24px;
}
.clock {
  width: 62px;
  margin-left: 7px;
  text-align: center;
  line-height: 16px;
  font-size: 11px;
  white-space: nowrap;
}
.notif {
  margin-left: 13px;
}

/* chart */
.chart {
  position: absolute;
  left: 587px;
  top: 225px;
}
.c-title {
  font-family: 'Lato', 'Noto Sans', sans-serif;
  font-size: 14.800px;
  fill: #595959;
}
.c-tick {
  font-family: 'Lato', 'Noto Sans', sans-serif;
  font-size: 10px;
  fill: #595959;
}
.c-axis {
  font-family: 'Lato', 'Noto Sans', sans-serif;
  font-size: 9.600px;
  fill: #595959;
}
.c-rot {
  font-family: 'Lato', 'Noto Sans', sans-serif;
  font-size: 10.800px;
  fill: #595959;
}
.c-label {
  font-family: 'Lato', 'Noto Sans', sans-serif;
  font-size: 11.500px;
  fill: #595959;
}

/* style pane */
.pane {
  position: absolute;
  left: 356px;
  top: 261px;
  width: 221px;
  height: 381px;
  box-sizing: border-box;
  background: #fff;
  border: 1px solid #3b7a60;
  box-shadow: 0 1px 3px rgba(0, 0, 0, 0.2);
}
.pane-tabs {
  height: 32px;
  margin-bottom: 2px;
  display: flex;
  align-items: center;
  padding-left: 11px;
  gap: 22px;
  font-size: 10.700px;
  color: #555;
}
.pane-tab.on {
  color: #217346;
  font-weight: 700;
}
.pane-body {
  display: flex;
  padding-left: 12px;
}
.pane-list {
  width: 180px;
  height: 331px;
  flex: none;
  overflow: hidden;
  display: flex;
  flex-direction: column;
  filter: blur(0.25px);
}
.pane-list svg {
  flex: none;
}
.p-t1 {
  font-size: 5.800px;
  fill: #555;
}
.p-t2 {
  font-size: 7px;
  font-weight: 700;
  letter-spacing: 0.4px;
  fill: #555;
}
.p-t3 {
  font-size: 7.400px;
  font-weight: 700;
  letter-spacing: 0.6px;
  fill: #888;
}
.p-xs {
  font-size: 4.200px;
  fill: #666;
}
.p-xs.pale {
  fill: #999;
}
.pane-scroll {
  margin-top: 2px;
  width: 14px;
  height: 328px;
  display: flex;
  flex-direction: column;
}
.ps-btn {
  width: 14px;
  height: 14px;
  flex: none;
  box-sizing: border-box;
  border: 1px solid #c4c4c4;
  display: flex;
  align-items: center;
  justify-content: center;
}
.ps-thumb {
  height: 56px;
  flex: none;
  box-sizing: border-box;
  border: 1px solid #c4c4c4;
  border-top: 0;
}
.ps-track {
  flex: 1;
  background: #f5f5f5;
}
.pane-arrow {
  position: absolute;
  left: 219px;
  top: 8px;
}

.pointer {
  position: absolute;
  left: 1020px;
  top: 225px;
}
</style>
